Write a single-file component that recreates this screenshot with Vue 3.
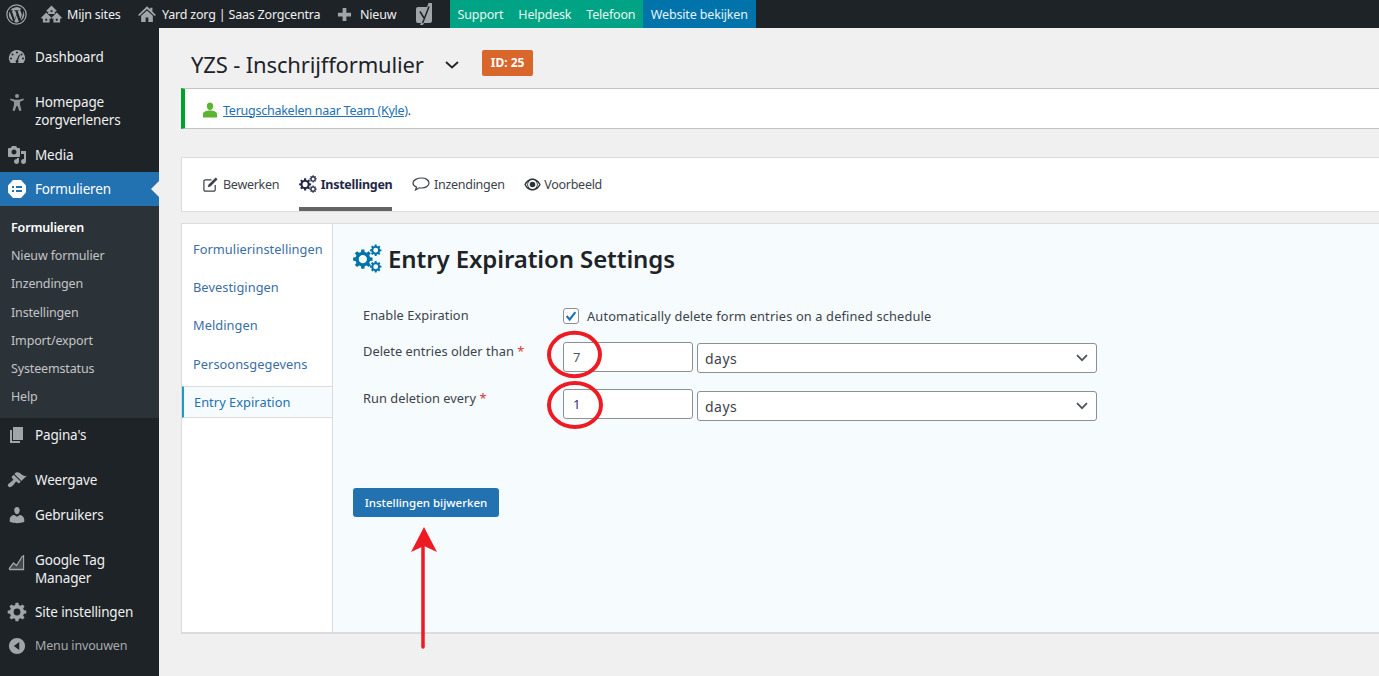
<script setup>
function gear(cx, cy, r, teeth = 8, hole = 0.42) {
  const pts = []
  const step = (Math.PI * 2) / teeth
  for (let i = 0; i < teeth; i++) {
    const a = i * step
    const w = step * 0.2
    const inner = r * 0.76
    const p = [
      [inner, a - step * 0.32],
      [r, a - w],
      [r, a + w],
      [inner, a + step * 0.32],
    ]
    p.forEach(([rad, an]) => pts.push(`${(cx + rad * Math.cos(an)).toFixed(2)} ${(cy + rad * Math.sin(an)).toFixed(2)}`))
  }
  const h = r * hole
  return `M${pts.join('L')}Z M${cx - h} ${cy}a${h} ${h} 0 1 0 ${h * 2} 0a${h} ${h} 0 1 0 ${-h * 2} 0Z`
}
const gears = gear(7.8, 12, 7.8) + ' ' + gear(18, 5, 4.6) + ' ' + gear(18, 18, 4.6)
const siteGear = gear(10, 10, 9.4, 8, 0.36)

const submenu = [
  { label: 'Formulieren', current: true },
  { label: 'Nieuw formulier' },
  { label: 'Inzendingen' },
  { label: 'Instellingen' },
  { label: 'Import/export' },
  { label: 'Systeemstatus' },
  { label: 'Help' },
]
const sideNav = ['Formulierinstellingen', 'Bevestigingen', 'Meldingen', 'Persoonsgegevens']
</script>

<template>
  <div class="page">
    <header class="adminbar">
      <div class="ab-item ab-wp">
        <svg class="ab-icon" viewBox="0 0 20 20" width="21" height="21"><circle cx="10" cy="10" r="9.2" fill="none" stroke="#a0a5aa" stroke-width="1.2"/><path fill="#a0a5aa" d="M2.8 10c0 2.9 1.7 5.3 4.1 6.5L3.4 7.1A7.2 7.2 0 0 0 2.8 10Zm12-.4c0-.9-.3-1.5-.6-2-.4-.6-.7-1.100-.7-1.600 0-.6.500-1.200 1.100-1.200h.1A7.200 7.200 0 0 0 4 6h.5c.8 0 1.900-.1 1.900-.1.400 0 .5.600.1.600l-.9.100 2.700 8.100 1.700-4.900-1.200-3.200-.8-.1c-.4 0-.4-.6 0-.6 0 0 1.200.1 2 .1s1.900-.1 1.900-.1c.4 0 .5.600.1.600l-.9.100 2.700 8 .7-2.500c.3-1 .6-1.700.6-2.300ZM10.100 10.700l-2.200 6.500a7.200 7.200 0 0 0 4.400-.1l-.1-.1Zm6.400-4.200.1.700c0 .7-.1 1.500-.5 2.500l-2.200 6.400a7.200 7.200 0 0 0 2.600-9.600Z"/></svg>
      </div>
      <div class="ab-item ab-sites">
        <svg class="ab-icon" viewBox="0 0 22 18" width="21" height="18"><path fill="#a0a5aa" fill-rule="evenodd" d="M11 0 5.500 5.500 6.800 6.800 7.500 6.200V9h7V6.200l.7.600 1.300-1.300ZM10 5h2v2h-2ZM5.500 7.500 0 13l1.200 1.200.8-.7V18h7v-4.500l.8.700L11 13Zm11 0L11 13l1.200 1.200.8-.7V18h7v-4.500l.8.700L22 13ZM4.500 14h2v2h-2Zm11 0h2v2h-2Z"/></svg>
        <span>Mijn sites</span>
      </div>
      <div class="ab-item ab-home">
        <svg class="ab-icon" viewBox="0 0 20 20" width="18" height="18"><path fill="#a0a5aa" d="M10 1.500 0 11l1.500 1.200L10 4.500l8.500 7.700L20 11l-4-3.800V3h-2.500v1.800ZM3.500 12v7h5v-5h3v5h5v-7L10 6Z"/></svg>
        <span>Yard zorg | Saas Zorgcentra</span>
      </div>
      <div class="ab-item ab-new">
        <svg class="ab-icon" viewBox="0 0 16 16" width="15" height="15"><path fill="#a0a5aa" d="M6 1h4v5h5v4h-5v5H6v-5H1V6h5Z"/></svg>
        <span>Nieuw</span>
      </div>
      <div class="ab-item ab-yoast">
        <svg class="ab-icon" viewBox="0 0 18 22" width="18" height="22"><path fill="#a0a5aa" d="M3 4h9l1.500-4H17v17.500a2.500 2.500 0 0 1-2.500 2.500H9l-1 2H5l1-2H3a2 2 0 0 1-2-2V6a2 2 0 0 1 2-2Z"/><path fill="none" stroke="#1d2327" stroke-width="1.500" d="M5 8.500 9 15M14 3.500 9 16.500 7.500 20"/></svg>
      </div>
      <div class="ab-link green">Support</div>
      <div class="ab-link green">Helpdesk</div>
      <div class="ab-link green">Telefoon</div>
      <div class="ab-link blue">Website bekijken</div>
    </header>

    <div class="shell">
      <aside class="sidebar">
        <div class="m m-dash">
          <svg viewBox="0 0 20 20" width="20" height="20"><path fill="#a0a5aa" fill-rule="evenodd" d="M10 3a8 8 0 0 0-6.300 13h12.600A8 8 0 0 0 10 3ZM10 4.500a1 1 0 1 1 0 2 1 1 0 0 1 0-2ZM5.500 6.500a1 1 0 1 1 0 2 1 1 0 0 1 0-2Zm9 0a1 1 0 1 1 0 2 1 1 0 0 1 0-2ZM4 10.500a1 1 0 1 1 0 2 1 1 0 0 1 0-2Zm12 0a1 1 0 1 1 0 2 1 1 0 0 1 0-2Zm-3.800-3 .8.400-2 5.300a1.500 1.500 0 1 1-1.500-.2Z"/></svg>
          <span>Dashboard</span>
        </div>
        <div class="m m-home">
          <svg viewBox="0 0 20 20" width="20" height="20"><path fill="#8f9499" d="M10 2a2 2 0 1 1 0 4 2 2 0 0 1 0-4ZM3.500 6.500l4.500 1.200h4l4.500-1.200.4 1.500-3.900 1.700v3L14.500 18.500l-2.200.5L10.500 14h-1l-1.800 5-2.200-.5L7 12.700v-3L3.100 8Z"/></svg>
          <span>Homepage<br>zorgverleners</span>
        </div>
        <div class="m m-media">
          <svg viewBox="0 0 20 20" width="20" height="20"><path fill="#a0a5aa" d="M13 11V4c0-.55-.45-1-1-1h-1.670L9 1H5L3.670 3H2c-.55 0-1 .45-1 1v7c0 .55.45 1 1 1h10c.55 0 1-.45 1-1zM7 4.500c1.380 0 2.500 1.120 2.500 2.500S8.380 9.500 7 9.500 4.500 8.380 4.500 7 5.620 4.500 7 4.500zM14 6h5v10.500c0 1.380-1.120 2.500-2.500 2.500S14 17.880 14 16.500s1.120-2.500 2.500-2.500c.17 0 .34.020.5.050V9h-3V6zm-4 8.050V13h2v3.500c0 1.380-1.120 2.500-2.500 2.500S7 17.880 7 16.500 8.120 14 9.500 14c.17 0 .34.020.5.050z"/></svg>
          <span>Media</span>
        </div>
        <div class="m current">
          <svg viewBox="0 0 20 20" width="20" height="20"><path fill="#fff" fill-rule="evenodd" d="M6 1h8l5 5.500v7L14 19H6l-5-5.500v-7ZM5 7v2h2V7Zm4 0v2h6V7Zm-4 4v2h2v-2Zm4 0v2h6v-2Z"/></svg>
          <span>Formulieren</span>
          <i class="caret"></i>
        </div>
        <ul class="sub">
          <li v-for="s in submenu" :key="s.label" :class="{ on: s.current }">{{ s.label }}</li>
        </ul>
        <div class="m m-pages">
          <svg viewBox="0 0 20 20" width="20" height="20"><path fill="#a0a5aa" d="M6 15V2h10v13H6zm-1 1h8v2H3V5h2v11z"/></svg>
          <span>Pagina's</span>
        </div>
        <div class="m m-look">
          <svg viewBox="0 0 20 20" width="20" height="20"><path fill="#a0a5aa" d="M14.480 11.060L7.410 3.990l1.500-1.500c.5-.56 2.300-.47 3.510.32 1.210.8 1.430 1.280 2.910 2.100 1.180.64 2.450 1.260 4.450.85zm-.71.71L6.700 4.700 4.930 6.470c-.39.39-.39 1.020 0 1.410l1.060 1.060c.39.39.39 1.030 0 1.420-.6.6-1.430 1.110-2.210 1.690-.35.26-.7.53-1.010.84C1.430 13.230 0 15.100 1.460 16.550c1.460 1.460 3.320.03 4.660-1.310.31-.31.58-.66.84-1.010.58-.78 1.090-1.610 1.690-2.210.39-.39 1.020-.39 1.410 0l1.060 1.060c.39.39 1.020.39 1.410 0z"/></svg>
          <span>Weergave</span>
        </div>
        <div class="m m-users">
          <svg viewBox="0 0 20 20" width="20" height="20"><path fill="#a0a5aa" d="M10 9.250c-2.270 0-2.730-3.440-2.730-3.440C7 4.020 7.820 2 9.970 2c2.160 0 2.980 2.020 2.710 3.810 0 0-.41 3.440-2.680 3.440zm0 2.570L12.720 10c2.390 0 4.520 2.330 4.520 4.530v2.490s-3.650 1.130-7.240 1.130c-3.650 0-7.240-1.130-7.240-1.130v-2.490c0-2.250 1.940-4.480 4.470-4.480z"/></svg>
          <span>Gebruikers</span>
        </div>
        <div class="m m-gtm">
          <svg viewBox="0 0 20 20" width="20" height="20"><path fill="none" stroke="#a0a5aa" stroke-width="1.300" d="M2 17.500h14.500V3M2 17l4.500-6 3 2.500L15.500 4"/><path fill="#a0a5aa" opacity=".3" d="M6.500 11l3 2.500 6-9v13H3Z"/></svg>
          <span>Google Tag<br>Manager</span>
        </div>
        <div class="m m-site">
          <svg viewBox="0 0 20 20" width="20" height="20"><path fill="#a0a5aa" fill-rule="evenodd" :d="siteGear"/></svg>
          <span>Site instellingen</span>
        </div>
        <div class="m m-collapse">
          <svg viewBox="0 0 20 20" width="18" height="18"><path fill="#a0a5aa" fill-rule="evenodd" d="M10 1a9 9 0 1 1 0 18 9 9 0 0 1 0-18ZM12.500 5.500 6.500 10l6 4.500Z"/></svg>
          <span>Menu invouwen</span>
        </div>
      </aside>

      <main class="main">
        <div class="title-row">
          <h1>YZS - Inschrijfformulier</h1>
          <svg class="title-caret" viewBox="0 0 14 8" width="14" height="8"><path fill="none" stroke="#1d2327" stroke-width="1.800" d="M1 1l6 5.500L13 1"/></svg>
          <span class="badge">ID: 25</span>
        </div>

        <div class="notice">
          <svg viewBox="0 0 16 16" width="16" height="16"><path fill="#5cb531" d="M8 .5c1.900 0 3.200 1.500 3.200 3.400S9.900 8 8 8 4.800 5.800 4.800 3.900 6.100.5 8 .5ZM8 8.500c4 0 7 1.400 7 3.500v3.500H1V12c0-2.100 3-3.500 7-3.500Z"/></svg>
          <span><a>Terugschakelen naar Team (Kyle)</a>.</span>
        </div>

        <nav class="tabs">
          <div class="tab">
            <svg viewBox="0 0 18 18" width="17" height="17"><path fill="none" stroke="#3c434a" stroke-width="1.300" d="M14 9.500v5a1.500 1.500 0 0 1-1.500 1.500h-9A1.500 1.500 0 0 1 2 14.500v-9A1.500 1.500 0 0 1 3.500 4H10"/><path fill="#3c434a" d="M14.500 1.500l2 2L9 11l-3 1 1-3Z"/></svg>
            <span>Bewerken</span>
          </div>
          <div class="tab active">
            <svg viewBox="0 0 23 23" width="18" height="18"><path fill="#242748" fill-rule="evenodd" :d="gears"/></svg>
            <span>Instellingen</span>
          </div>
          <div class="tab">
            <svg viewBox="0 0 18 18" width="18" height="18"><path fill="none" stroke="#3c434a" stroke-width="1.200" d="M9.500 3c4 0 7.500 2 7.500 5s-3.500 5-7.500 5c-.8 0-1.500 0-2.200-.2L3.500 15l1-3C2.500 11.200 1 9.800 1 8c0-3 4.500-5 8.500-5Z"/></svg>
            <span>Inzendingen</span>
          </div>
          <div class="tab tab-last">
            <svg viewBox="0 0 18 14" width="17" height="13"><path fill="#2c3338" fill-rule="evenodd" d="M9 .5c3.800 0 7 2.500 8.800 6.500C16 11 12.800 13.500 9 13.500S2 11 .2 7C2 3 5.200.5 9 .5Zm0 1.700a4.800 4.800 0 1 0 0 9.600 4.800 4.800 0 0 0 0-9.600ZM1.800 7c.7 1.300 1.600 2.400 2.700 3.300A5.500 5.500 0 0 1 4.500 3.700C3.400 4.600 2.500 5.700 1.800 7Zm14.400 0c-.7-1.300-1.600-2.400-2.700-3.300a5.500 5.500 0 0 1 0 6.600c1.100-.9 2-2 2.700-3.300ZM9 4a3 3 0 1 1 0 6 3 3 0 0 1 0-6Z"/></svg>
            <span>Voorbeeld</span>
          </div>
        </nav>

        <section class="panel">
          <ul class="side-nav">
            <li v-for="n in sideNav" :key="n">{{ n }}</li>
            <li class="sel">Entry Expiration</li>
          </ul>
          <div class="content">
            <h2>
              <svg viewBox="0 0 23 23" width="29" height="29"><path fill="#0073aa" fill-rule="evenodd" :d="gears"/></svg>
              Entry Expiration Settings
            </h2>
            <div class="form">
              <div class="row row-check">
                <label>Enable Expiration</label>
                <div class="check-wrap">
                  <span class="check"><svg viewBox="0 0 16 16" width="14" height="14"><path fill="none" stroke="#2271b1" stroke-width="2.400" d="M3 8l3.500 4L13 3.500"/></svg></span>
                  <span>Automatically delete form entries on a defined schedule</span>
                </div>
              </div>
              <div class="row row-a">
                <label>Delete entries older than <b>*</b></label>
                <div class="fields">
                  <div class="input">7</div>
                  <div class="select">days<svg viewBox="0 0 12 8" width="12" height="8"><path fill="none" stroke="#50575e" stroke-width="1.800" d="M1 1.200l5 5 5-5"/></svg></div>
                </div>
              </div>
              <div class="row row-b">
                <label>Run deletion every <b>*</b></label>
                <div class="fields">
                  <div class="input violet">1</div>
                  <div class="select">days<svg viewBox="0 0 12 8" width="12" height="8"><path fill="none" stroke="#50575e" stroke-width="1.800" d="M1 1.200l5 5 5-5"/></svg></div>
                </div>
              </div>
            </div>
            <button class="save" type="button">Instellingen bijwerken</button>
          </div>
        </section>
      </main>
    </div>

    <svg class="annotations" viewBox="0 0 1379 676" width="1379" height="676">
      <ellipse cx="574.500" cy="354.500" rx="25.500" ry="21.700" fill="none" stroke="#ed1c24" stroke-width="4"/>
      <ellipse cx="575" cy="405" rx="26" ry="22" fill="none" stroke="#ed1c24" stroke-width="4"/>
      <path fill="none" stroke="#ed1c24" stroke-width="3.500" stroke-linecap="round" d="M423 647V540"/>
      <path fill="#ed1c24" d="M424 527l13 25-13-6-13 6Z"/>
    </svg>
  </div>
</template>

<style scoped>
* { box-sizing: border-box; }
.page {
  position: relative;
  width: 1379px;
  height: 676px;
  overflow: hidden;
  background: #f0f0f1;
  font-family: "Noto Sans", "Open Sans", sans-serif;
  font-size: 13px;
  color: #3c434a;
  letter-spacing: -0.15px;
}
.adminbar {
  display: flex;
  align-items: stretch;
  height: 28px;
  background: #1d2327;
  color: #f0f0f1;
  font-size: 12.500px;
  letter-spacing: -0.2px;
}
.ab-item { display: flex; align-items: center; gap: 5px; }
.ab-icon { flex: none; }
.ab-wp { padding-left: 6px; width: 41px; }
.ab-sites { width: 97px; }
.ab-home { width: 199px; gap: 6px; }
.ab-new { width: 78px; gap: 8px; }
.ab-yoast { width: 35px; }
.ab-link { display: flex; align-items: center; padding: 0 7.500px; color: #e8f6f3; }
.ab-link.green { background: #00a383; }
.ab-link.blue { background: #0073aa; color: #e6f2f8; padding: 0 8px; letter-spacing: -0.15px; }

.shell { display: flex; height: 648px; }
.sidebar {
  flex: none;
  width: 159px;
  background: #1d2327;
  color: #f0f0f1;
  font-size: 13.500px;
  line-height: 18px;
}
.m { display: flex; align-items: center; position: relative; padding-left: 7px; gap: 8px; height: 34px; }
.m svg { flex: none; }
.m-dash { margin-top: 12px; }
.m-home { height: 36px; margin-top: 19px; align-items: flex-start; }
.m-home svg { margin-top: -1px; }
.m-media { margin-top: 9px; }
.m.current { background: #2271b1; color: #fff; }
.caret {
  position: absolute;
  right: 0;
  top: 9px;
  border: 8px solid transparent;
  border-right-color: #f0f0f1;
  border-left: 0;
}
.sub { list-style: none; margin: 0; padding: 8px 0 0; height: 212px; background: #2c3338; font-size: 12.500px; }
.sub li { height: 28.200px; line-height: 28px; padding-left: 11px; color: #c3c4c7; }
.sub li.on { color: #fff; font-weight: 600; }
.m-look { margin-top: 11px; }
.m-users { margin-top: 1px; }
.m-gtm { height: 36px; margin-top: 19px; }
.m-gtm svg { margin-top: -14px; }
.m-site { margin-top: 8px; }
.m-collapse { color: #a7aaad; font-size: 12.500px; padding-left: 8px; gap: 9px; }

.main { flex: 1; min-width: 0; padding-left: 22px; }
.title-row { display: flex; align-items: center; height: 60px; padding-top: 11px; }
h1 { margin: 0 0 0 10px; font-size: 22px; font-weight: 400; color: #1d2327; letter-spacing: -0.15px; }
.title-caret { margin: 3px 0 0 21px; }
.badge {
  margin-left: 23px;
  margin-top: -1px;
  background: #d9662b;
  color: #fff;
  border-radius: 2px;
  font-size: 12px;
  font-weight: 700;
  letter-spacing: 0;
  height: 26px;
  line-height: 26px;
  padding: 0 9px;
}
.notice {
  display: flex;
  align-items: center;
  gap: 5px;
  height: 41px;
  background: #fff;
  border: solid #c3c4c7;
  border-width: 1px 0;
  border-left: 4px solid #00a32a;
  padding: 3px 0 0 17px;
  font-size: 12.500px;
  letter-spacing: -0.25px;
}
.notice a { color: #2271b1; text-decoration: underline; }
.tabs {
  display: flex;
  align-items: stretch;
  height: 55px;
  margin-top: 28px;
  padding-left: 20px;
  gap: 19.500px;
  background: #fff;
  border: 1px solid #dcdcde;
  border-right: 0;
  font-size: 12.500px;
  letter-spacing: -0.27px;
}
.tab { display: flex; align-items: center; gap: 4px; border-bottom: 4px solid transparent; padding-top: 3px; }
.tab-last { gap: 3px; }
.tab.active { color: #242748; font-weight: 700; border-bottom-color: #646464; }
.panel {
  display: flex;
  height: 411px;
  margin-top: 11px;
  background: #fff;
  border: 1px solid #dcdcde;
  border-right: 0;
  border-bottom-width: 2px;
}
.side-nav {
  flex: none;
  width: 150px;
  margin: 0;
  padding: 6px 0 0;
  list-style: none;
  color: #3a6ea5;
  font-size: 12.800px;
  letter-spacing: .05px;
}
.side-nav li { height: 38.200px; line-height: 38px; padding-left: 11px; }
.side-nav li.sel {
  height: 32px;
  line-height: 30px;
  margin-top: 3px;
  background: #f6fbfe;
  border: solid #dcdcde;
  border-width: 1px 0;
  border-left: 2px solid #1a9bc9;
  padding-left: 10px;
  color: #2271b1;
}
.content { flex: 1; min-width: 0; background: #f6fbfe; border-left: 1px solid #dcdcde; padding-left: 20px; }
h2 {
  display: flex;
  align-items: center;
  gap: 6px;
  height: 68px;
  margin: 0;
  padding-top: 1px;
  font-size: 24px;
  font-weight: 600;
  color: #1d2327;
  letter-spacing: -0.1px;
}
.form { margin-left: 10px; }
.row { display: flex; font-size: 12.800px; letter-spacing: .05px; }
.row label { width: 200px; flex: none; white-space: nowrap; line-height: 20px; margin-top: -1px; }
.row label b { color: #d63638; font-weight: 400; }
.row-check { margin-top: 8px; height: 30px; align-items: center; }
.row-check label { margin-top: 0; }
.check-wrap { display: flex; align-items: center; gap: 8px; margin-top: 2px; letter-spacing: .15px; }
.check { width: 16px; height: 16px; border: 1px solid #8c8f94; border-radius: 3px; background: #fff; display: flex; align-items: center; justify-content: center; }
.row-a { margin-top: 12px; height: 30px; }
.row-b { margin-top: 17px; height: 30px; }
.fields { display: flex; gap: 4px; }
.input, .select {
  height: 30px;
  background: #fff;
  border: 1px solid #8c8f94;
  border-radius: 3px;
  display: flex;
  align-items: center;
  font-size: 13px;
}
.input { width: 130px; padding-left: 9px; color: #50575e; }
.input.violet { color: #3f2a8a; }
.select { width: 400px; justify-content: space-between; padding: 0 8px 0 7px; font-size: 14px; letter-spacing: .5px; color: #3c434a; }
.row-a .select { margin-top: 1px; }
.row-b .select { margin-top: 2px; }
.save {
  display: block;
  margin-top: 69px;
  width: 146px;
  height: 29px;
  background: #2271b1;
  color: #fff;
  border: 0;
  border-radius: 3px;
  font: 500 11.500px "Noto Sans", sans-serif;
  letter-spacing: 0;
}
.annotations { position: absolute; left: 0; top: 0; pointer-events: none; }
</style>
